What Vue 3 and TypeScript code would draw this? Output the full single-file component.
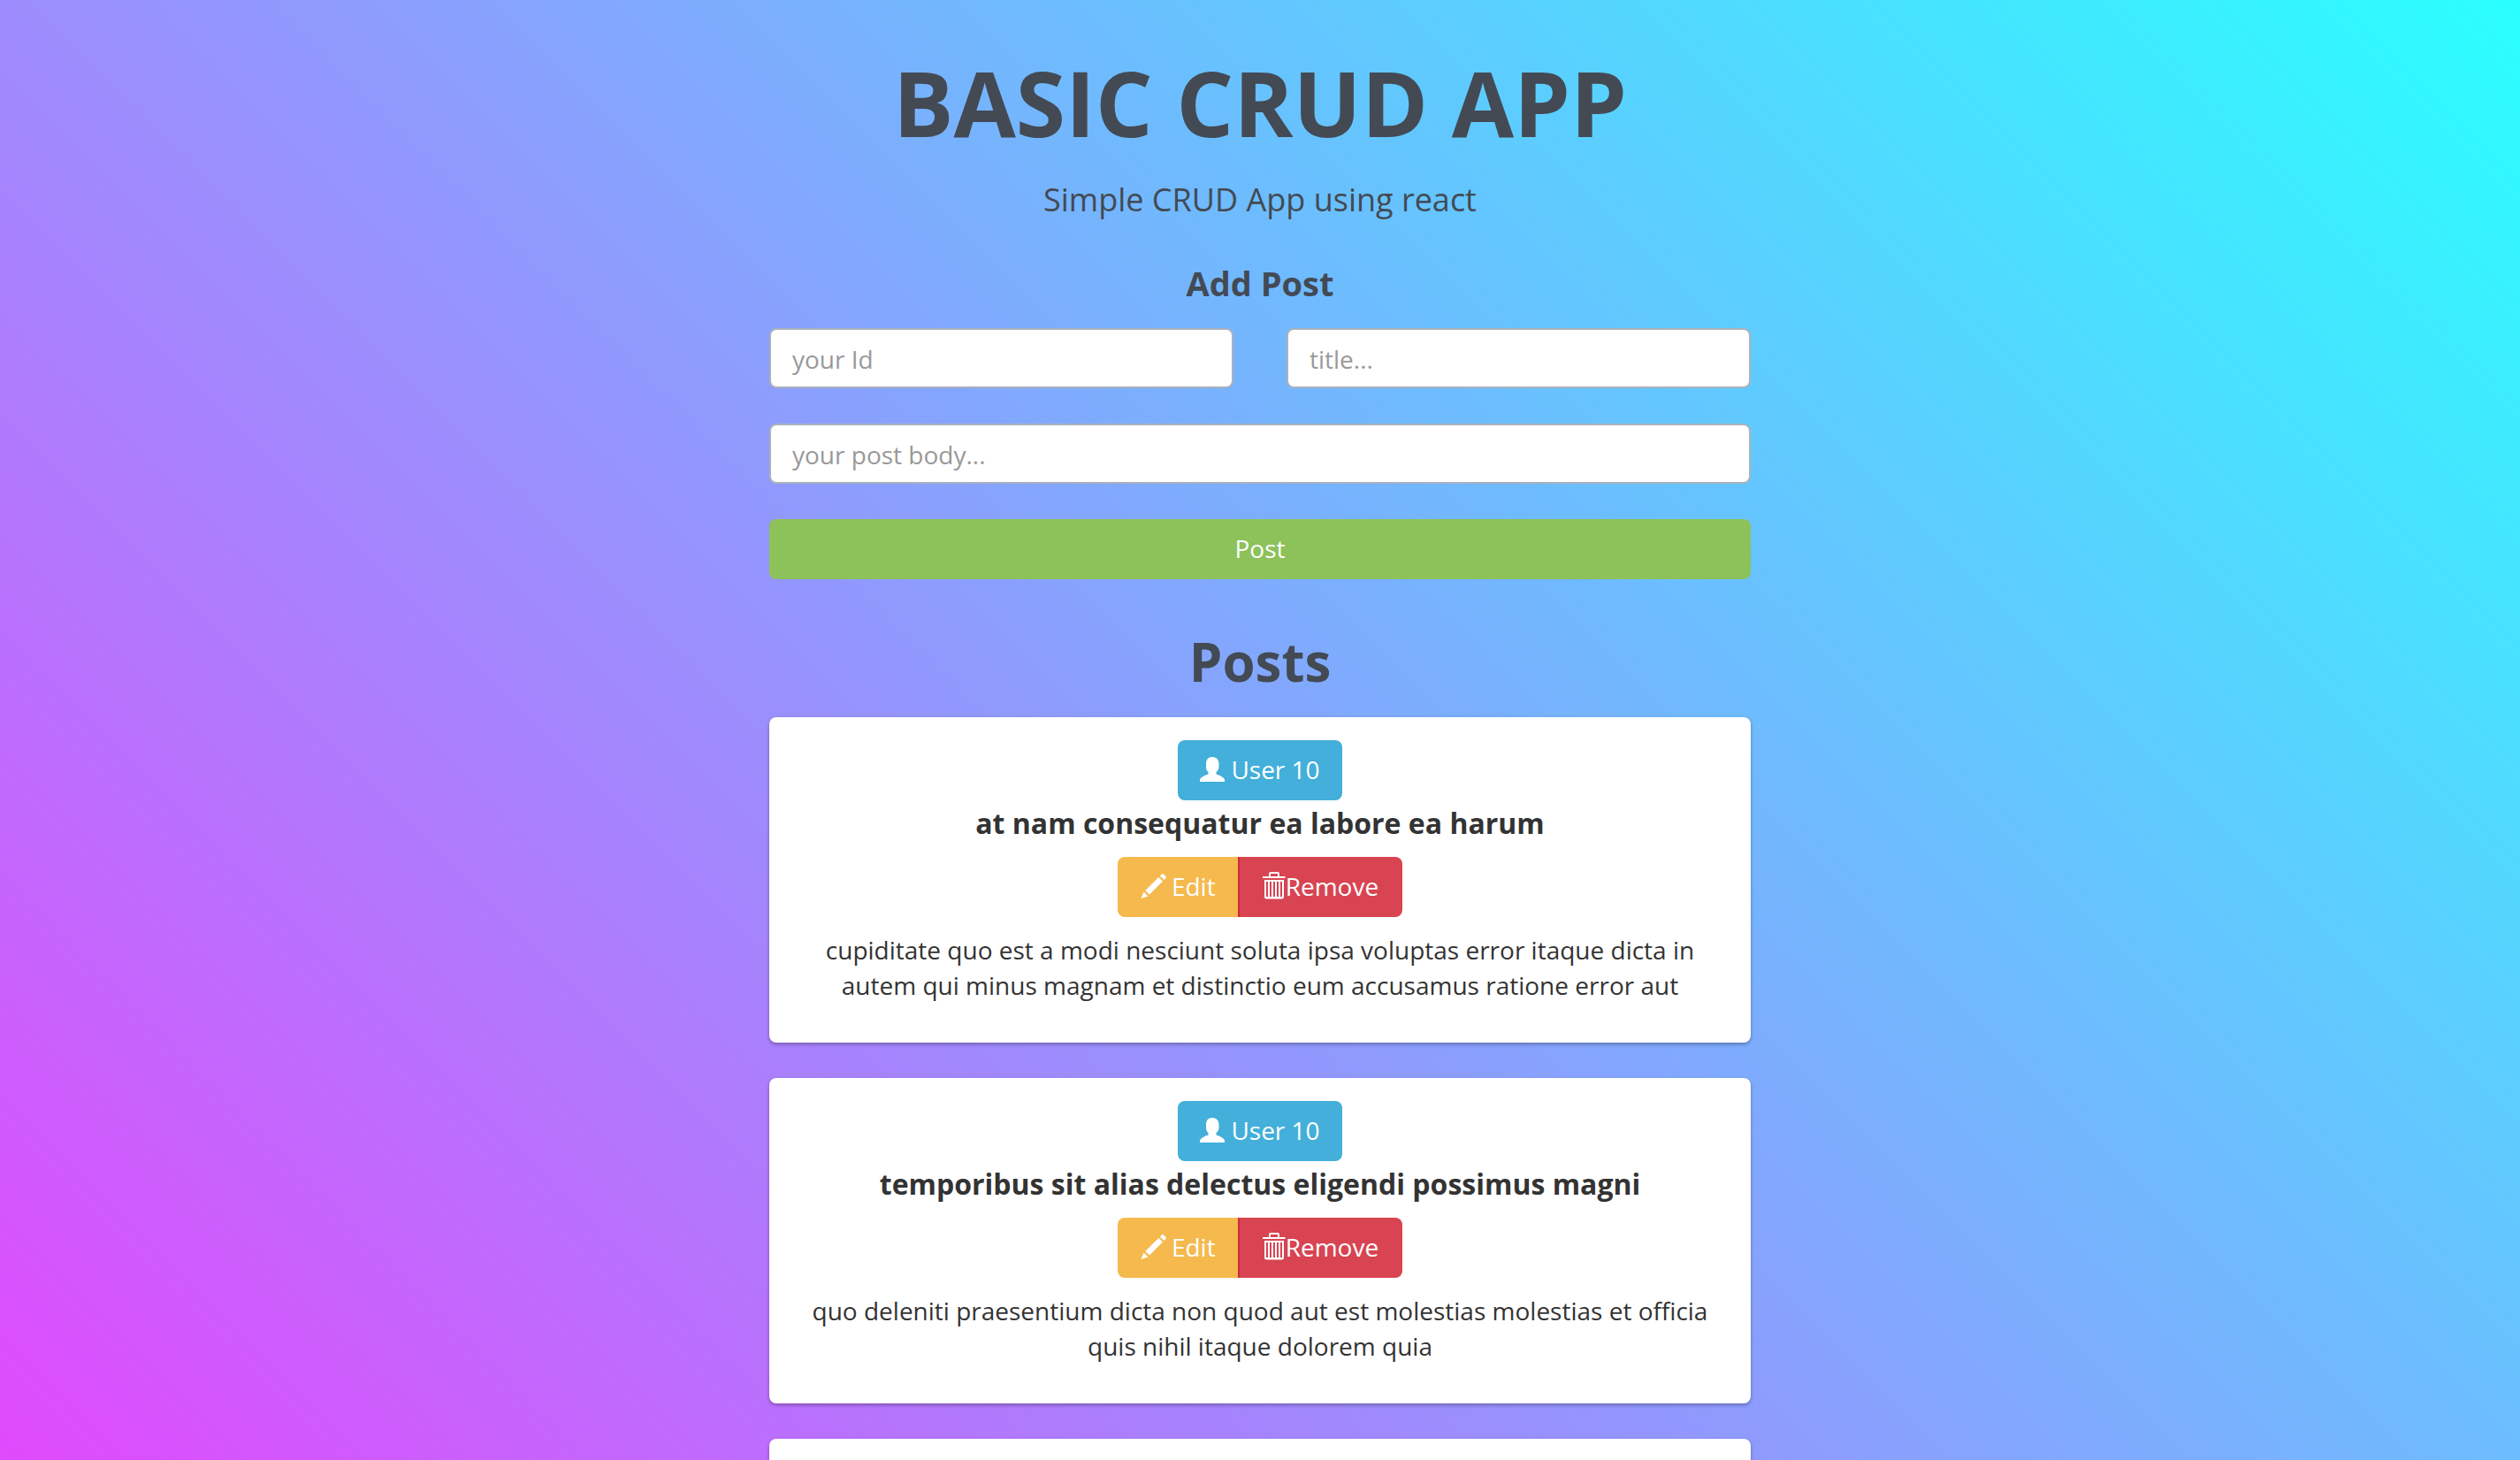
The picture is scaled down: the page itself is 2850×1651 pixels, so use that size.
<script setup lang="ts">
import { ref } from 'vue'

interface Post {
  id: number
  userId: number
  title: string
  body: string
}

const userId = ref('')
const title = ref('')
const body = ref('')

const posts = ref<Post[]>([
  {
    id: 1,
    userId: 10,
    title: 'at nam consequatur ea labore ea harum',
    body: 'cupiditate quo est a modi nesciunt soluta ipsa voluptas error itaque dicta in autem qui minus magnam et distinctio eum accusamus ratione error aut',
  },
  {
    id: 2,
    userId: 10,
    title: 'temporibus sit alias delectus eligendi possimus magni',
    body: 'quo deleniti praesentium dicta non quod aut est molestias molestias et officia quis nihil itaque dolorem quia',
  },
])

function addPost(): void {
  posts.value.unshift({
    id: Date.now(),
    userId: Number(userId.value),
    title: title.value,
    body: body.value,
  })
}

function editPost(post: Post): void {
  userId.value = String(post.userId)
  title.value = post.title
  body.value = post.body
}

function removePost(id: number): void {
  posts.value = posts.value.filter((post) => post.id !== id)
}
</script>

<template>
  <div class="page">
    <main class="container">
      <header class="hero">
        <h1>BASIC CRUD APP</h1>
        <p>Simple CRUD App using react</p>
      </header>

      <form class="post-form" @submit.prevent="addPost">
        <h4>Add Post</h4>
        <div class="row">
          <input v-model="userId" type="text" placeholder="your Id" aria-label="your Id" />
          <input v-model="title" type="text" placeholder="title..." aria-label="title" />
        </div>
        <input v-model="body" type="text" placeholder="your post body..." aria-label="your post body" />
        <button type="submit" class="btn success">Post</button>
      </form>

      <section class="posts">
        <h2>Posts</h2>
        <article v-for="post in posts" :key="post.id" class="card">
          <button type="button" class="btn info">
            <svg class="icon" viewBox="0 0 28 30" aria-hidden="true">
              <path d="M14 1C18.500 1 21.500 4 21.500 8.500V12C21.500 14.500 20.500 16.500 18.500 18V20.500C22 21.500 28 24.500 28 27V29H0V27C0 24.500 6 21.500 9.500 20.500V18C7.500 16.500 7 14.500 7 12V8.500C7 4 9.500 1 14 1Z" />
            </svg>
            <span>User {{ post.userId }}</span>
          </button>
          <h3>{{ post.title }}</h3>
          <div class="btn-group">
            <button type="button" class="btn warning" @click="editPost(post)">
              <svg class="icon" viewBox="0 0 28 30" aria-hidden="true">
                <path d="M24 1.400Q25 .6 26 1.500L28.500 4Q29.300 5 28.500 6L26.500 8L21.800 3.500ZM20.300 5L25 9.600L10 24.600L5.200 20ZM3.600 21.500L8.400 26.400L0.400 29Z" />
              </svg>
              <span>Edit</span>
            </button>
            <button type="button" class="btn danger" @click="removePost(post.id)">
              <svg class="icon" viewBox="0 0 28 30" aria-hidden="true">
                <path fill-rule="evenodd" d="M9 4V1Q9 -1 11 -1H19Q21 -1 21 1V4H27.500V6H2V4ZM11 4H19V1H11ZM4 8H26V27Q26 29.500 23.500 29.500H6.500Q4 29.500 4 27ZM6 10V27H8V10ZM10 10V27H12V10ZM14 10V27H16V10ZM18 10V27H20V10ZM22 10V27H24V10Z" />
              </svg>
              <span>Remove</span>
            </button>
          </div>
          <p>{{ post.body }}</p>
        </article>
        <article class="card"></article>
      </section>
    </main>
  </div>
</template>

<style>
body {
  margin: 0;
}
</style>

<style scoped>
* {
  box-sizing: border-box;
}

.page {
  height: 100vh;
  overflow-y: auto;
  scrollbar-width: none;
  background: linear-gradient(45deg, #e04afc, #2affff);
  color: #434a54;
  font-family: "Open Sans", sans-serif;
  font-size: 28px;
  line-height: 40px;
  text-align: center;
}

.container {
  width: 100%;
  max-width: 1110px;
  margin: 0 auto;
  padding-top: 60px;
}

h1,
h2,
h3,
h4,
p {
  margin: 0;
}

h1 {
  font-size: 102px;
  line-height: 112px;
}

.hero p {
  margin-top: 26px;
  font-size: 36px;
  line-height: 56px;
}

h4 {
  font-size: 38px;
  line-height: 40px;
}

.post-form {
  display: flex;
  flex-direction: column;
  gap: 40px;
  margin-top: 46px;
}

.post-form h4 {
  margin-bottom: -9px;
}

.row {
  display: grid;
  grid-template-columns: 1fr 1fr;
  gap: 60px;
}

input {
  width: 100%;
  min-width: 0;
  height: 68px;
  padding: 14px 24px 12px;
  border: 2px solid #aab2bc;
  border-radius: 8px;
  background: #fff;
  color: #434a54;
  font: inherit;
}

input::placeholder {
  color: #999;
  opacity: 1;
}

.btn {
  display: inline-flex;
  align-items: center;
  justify-content: center;
  gap: 7px;
  height: 68px;
  padding: 0 25px 2px;
  border: 0;
  border-radius: 8px;
  color: #fff;
  font: inherit;
}

.success {
  background: #8dc15a;
}

.info {
  background: #43afda;
}

.btn-group {
  display: flex;
  justify-content: center;
}

.warning {
  padding-left: 26px;
  border-radius: 8px 0 0 8px;
  background: #f5b94d;
}

.danger {
  gap: 0;
  padding-right: 27px;
  padding-left: 24px;
  border-left: 2px solid #d02a3e;
  border-radius: 0 8px 8px 0;
  background: #d84452;
}

.icon {
  width: 28px;
  height: 30px;
  overflow: visible;
  fill: currentColor;
}

.posts {
  display: flex;
  flex-direction: column;
  gap: 40px;
  margin-top: 60px;
}

h2 {
  margin-bottom: -10px;
  font-size: 60px;
  line-height: 66px;
}

.card {
  display: flex;
  flex-direction: column;
  align-items: center;
  flex: none;
  min-height: 368px;
  padding: 26px 30px;
  border-radius: 8px;
  background: #fff;
  box-shadow: 0 2px 4px rgba(0, 0, 0, 0.3);
  color: #333;
}

.card h3 {
  margin: 8px 0 20px;
  font-size: 32px;
  line-height: 36px;
}

.card p {
  margin-top: 17px;
}
</style>
